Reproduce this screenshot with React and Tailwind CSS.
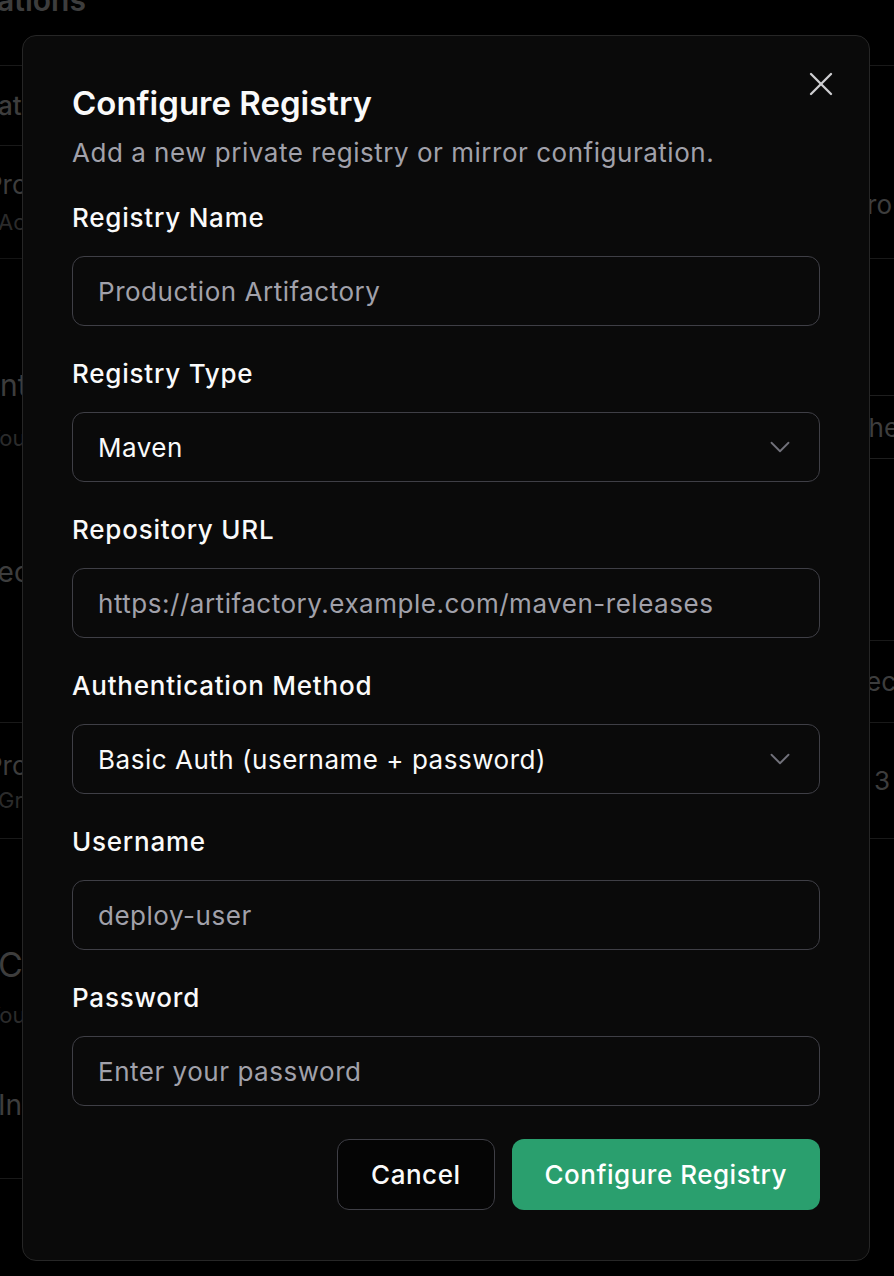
import React from 'react';
import { X, ChevronDown } from 'lucide-react';

const font = { fontFamily: 'Inter, "Noto Sans", sans-serif' };

// dim page that sits behind the modal, only its edges show
const BackgroundPage = () => (
  <div className="grid grid-cols-2 w-full">
    {/* left column */}
    <div className="flex flex-col text-[#666]">
      <div className="h-[40px] -mt-[20px] flex items-center">
        <span className="-ml-[88px] text-[30px] leading-[36px] font-semibold whitespace-nowrap">Integrations</span>
      </div>
      <div className="h-[45px]" />
      <div className="h-[80px] border-t border-[#2a2a2a] flex items-center">
        <span className="-ml-[2px] text-[26px] font-medium">ations</span>
      </div>
      <div className="h-[113px] border-t border-[#2a2a2a] pt-[23px] flex flex-col gap-[7px]">
        <span className="-ml-[14px] text-[26px] leading-[32px]">Pro</span>
        <span className="-ml-[2px] text-[22px] leading-[28px] text-[#484848]">Act</span>
      </div>
      <div className="h-[464px] border-t border-[#222] pt-[108px] flex flex-col">
        <span className="-ml-[8px] text-[30px] leading-[36px]">Int</span>
        <span className="mt-[21px] -ml-[14px] text-[22px] leading-[28px] text-[#484848]">You</span>
        <span className="mt-[103px] -ml-[20px] text-[28px] leading-[34px]">Rec</span>
      </div>
      <div className="h-[116px] border-t border-[#2a2a2a] pt-[27px] flex flex-col gap-[4px]">
        <span className="-ml-[14px] text-[26px] leading-[32px]">Pro</span>
        <span className="-ml-[2px] text-[22px] leading-[28px] text-[#484848]">Gro</span>
      </div>
      <div className="h-[340px] border-t border-[#2a2a2a] pt-[106px] flex flex-col">
        <span className="-ml-[2px] text-[34px] leading-[40px]">CI</span>
        <span className="mt-[16px] -ml-[14px] text-[22px] leading-[28px] text-[#484848]">You</span>
        <span className="mt-[59px] -ml-[2px] text-[28px] leading-[34px]">In</span>
      </div>
      <div className="h-[100px] border-t border-[#2a2a2a]" />
    </div>

    {/* right column */}
    <div className="flex flex-col text-[#666]">
      <div className="h-[65px]" />
      <div className="h-[193px] border-t border-[#2a2a2a] pt-[123px] flex justify-end">
        <span className="mr-[2px] text-[26px] leading-[32px]">Pro</span>
      </div>
      <div className="h-[137px] border-t border-[#2a2a2a]" />
      <div className="h-[63px] border-t border-[#333] flex items-center justify-end">
        <span className="-mr-[20px] text-[26px]">Chec</span>
      </div>
      <div className="h-[182px] border-t border-[#333]" />
      <div className="h-[82px] border-t border-[#2a2a2a] flex items-center justify-end">
        <span className="-mr-[2px] text-[26px]">Rec</span>
      </div>
      <div className="h-[116px] border-t border-[#2a2a2a] flex items-center justify-end">
        <span className="mr-[4px] text-[26px]">3</span>
      </div>
      <div className="h-[440px] border-t border-[#2a2a2a]" />
    </div>
  </div>
);

const Field = ({ label, children }) => (
  <div className="flex flex-col gap-[21px]">
    <label className="text-[26px] leading-[35px] tracking-[0.03em] font-medium text-[#fafafa]">{label}</label>
    {children}
  </div>
);

const Input = ({ placeholder, type = 'text' }) => (
  <input
    type={type}
    placeholder={placeholder}
    style={font}
    className="h-[70px] w-full rounded-[12px] border border-[#3f3f46] bg-transparent px-[25px] text-[26px] tracking-[0.02em] text-[#fafafa] placeholder:text-[#a1a1aa] outline-none"
  />
);

const Select = ({ value }) => (
  <div className="h-[70px] w-full rounded-[12px] border border-[#3f3f46] pl-[25px] pr-[22px] flex items-center justify-between">
    <span className="text-[26px] tracking-[0.02em] text-[#fafafa]">{value}</span>
    <ChevronDown size={34} strokeWidth={1.3} className="text-[#71717a]" />
  </div>
);

export default function App() {
  return (
    <div className="relative h-[1276px] overflow-hidden bg-black" style={font}>
      <BackgroundPage />
      <div className="absolute inset-0 bg-black/40" />

      <div className="absolute left-[22px] top-[35px] w-[848px] rounded-[14px] border border-[#262626] bg-[#0a0a0a] px-[49px] pt-[48px] pb-[50px]">
        <button className="absolute right-[28px] top-[28px] text-[#cfcfd2]">
          <X size={40} strokeWidth={1.4} />
        </button>

        <div className="flex flex-col">
          <h2 className="text-[33px] leading-[38px] font-semibold text-[#fafafa]">Configure Registry</h2>
          <p className="mt-[13px] text-[26px] leading-[35px] tracking-[0.02em] text-[#a1a1aa]">
            Add a new private registry or mirror configuration.
          </p>
        </div>

        <div className="mt-[30px] flex flex-col gap-[30px]">
          <Field label="Registry Name">
            <Input placeholder="Production Artifactory" />
          </Field>
          <Field label="Registry Type">
            <Select value="Maven" />
          </Field>
          <Field label="Repository URL">
            <Input placeholder="https://artifactory.example.com/maven-releases" />
          </Field>
          <Field label="Authentication Method">
            <Select value="Basic Auth (username + password)" />
          </Field>
          <Field label="Username">
            <Input placeholder="deploy-user" />
          </Field>
          <Field label="Password">
            <Input type="password" placeholder="Enter your password" />
          </Field>
        </div>

        <div className="mt-[33px] flex justify-end gap-[17px]">
          <button className="h-[71px] rounded-[12px] border border-[#3f3f46] bg-[#050505] px-[33px] text-[26px] tracking-[0.02em] font-medium text-[#fafafa]">
            Cancel
          </button>
          <button className="h-[71px] rounded-[12px] bg-[#2a9f6e] px-[33px] text-[26px] tracking-[0.02em] font-medium text-white">
            Configure Registry
          </button>
        </div>
      </div>
    </div>
  );
}
